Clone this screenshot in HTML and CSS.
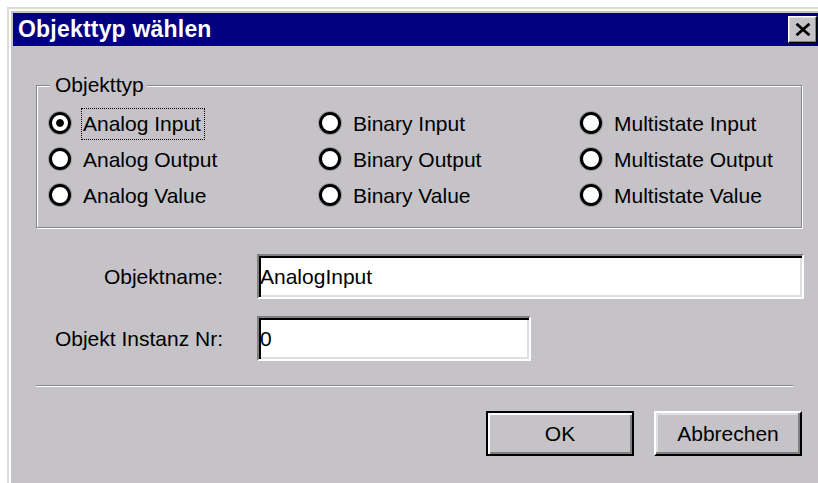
FILE: index.html
```html
<!DOCTYPE html>
<html lang="de">
<head>
<meta charset="utf-8">
<title>Objekttyp wählen</title>
<link rel="stylesheet" href="styles.css">
</head>
<body>
<div class="window">
  <div class="titlebar">
    <span class="title">Objekttyp wählen</span>
    <button class="close" type="button" aria-label="Schließen">
      <svg viewBox="0 0 16 13" width="16" height="13"><path d="M1.5 0.8 L14.5 12.2 M14.5 0.8 L1.5 12.2" stroke="#000" stroke-width="2.8" fill="none"/></svg>
    </button>
  </div>
  <div class="content">
    <div class="group" role="radiogroup" aria-label="Objekttyp">
      <span class="group-title">Objekttyp</span>
      <div class="options">
        <label class="option"><input type="radio" name="typ" checked><span class="caption focus">Analog Input</span></label>
        <label class="option"><input type="radio" name="typ"><span class="caption">Binary Input</span></label>
        <label class="option"><input type="radio" name="typ"><span class="caption">Multistate Input</span></label>
        <label class="option"><input type="radio" name="typ"><span class="caption">Analog Output</span></label>
        <label class="option"><input type="radio" name="typ"><span class="caption">Binary Output</span></label>
        <label class="option"><input type="radio" name="typ"><span class="caption">Multistate Output</span></label>
        <label class="option"><input type="radio" name="typ"><span class="caption">Analog Value</span></label>
        <label class="option"><input type="radio" name="typ"><span class="caption">Binary Value</span></label>
        <label class="option"><input type="radio" name="typ"><span class="caption">Multistate Value</span></label>
      </div>
    </div>
    <div class="fields">
      <label class="field-label" for="objname">Objektname:</label>
      <input class="text wide" id="objname" type="text" value="AnalogInput">
      <label class="field-label" for="objnr">Objekt Instanz Nr:</label>
      <input class="text short" id="objnr" type="text" value="0">
    </div>
    <hr class="separator">
    <div class="buttons">
      <button class="btn default" type="button">OK</button>
      <button class="btn" type="button">Abbrechen</button>
    </div>
  </div>
</div>
</body>
</html>
```

FILE: styles.css
```css
* { box-sizing: border-box; }

html, body { margin: 0; height: 100%; }

body {
  background: #fff;
  overflow: hidden;
  font-family: "Liberation Sans", Arial, sans-serif;
  font-size: 21px;
  color: #000;
}

/* dialog frame: light outer line, white inner line, grey gap */
.window {
  margin: 7px 0 0 7px;
  width: 819px;
  height: 500px;
  background: #c5c3c7;
  border: 2px solid #dcdbde;
  border-right-color: #000;
  border-bottom-color: #000;
  box-shadow: inset 2px 2px 0 #fff;
  padding: 4px;
  display: flex;
  flex-direction: column;
}

.titlebar {
  height: 33px;
  flex: none;
  background: #000080;
  display: flex;
  align-items: center;
  justify-content: space-between;
  padding: 0 3px 0 5px;
}

.title {
  color: #fff;
  font-weight: bold;
  font-size: 23px;
  line-height: 1;
  letter-spacing: 0.2px;
}

.close {
  width: 29px;
  height: 27px;
  padding: 0;
  margin: 0;
  background: #c5c3c7;
  border: 1px solid;
  border-color: #fff #000 #000 #fff;
  box-shadow: inset -1px -1px 0 #808080, inset 1px 1px 0 #dfdfdf;
  display: flex;
  align-items: center;
  justify-content: center;
}

.content {
  padding: 39px 0 0 23px;
  display: flex;
  flex-direction: column;
  align-items: flex-start;
}

/* etched group box */
.group {
  width: 766px;
  border: 1px solid #868589;
  box-shadow: inset 1px 1px 0 #fff, 1px 1px 0 #fff;
  display: flex;
  flex-direction: column;
}

.group-title {
  align-self: flex-start;
  margin: -12px 0 0 13px;
  padding: 0 3px 0 5px;
  line-height: 22px;
  background: #c5c3c7;
}

.options {
  margin-top: 10px;
  padding: 0 0 13px 12px;
  display: grid;
  grid-template-columns: 270px 261px 1fr;
  grid-auto-rows: 36px;
}

.option {
  display: flex;
  align-items: center;
}

/* round option marker: heavy black ring on white */
.option input {
  appearance: none;
  -webkit-appearance: none;
  width: 22px;
  height: 22px;
  margin: 0 0 3px 0;
  border-radius: 50%;
  border: 3.5px solid #000;
  background: #fff;
  box-shadow: 0 0 0 1px rgba(60, 60, 60, 0.3);
  flex: none;
}

.option input:checked {
  background: radial-gradient(circle, #000 0 3.4px, #fff 4.4px);
}

.caption {
  margin-left: 10px;
  padding: 4px 3px 4px 1px;
  line-height: 22px;
  border: 1px dotted transparent;
  white-space: nowrap;
}

.caption.focus { border-color: #000; }

.fields {
  margin-top: 26px;
  display: grid;
  grid-template-columns: 187px 547px;
  column-gap: 34px;
  row-gap: 17px;
  align-items: center;
}

.field-label {
  text-align: right;
  white-space: nowrap;
}

/* sunken edit field */
.text {
  height: 45px;
  margin: 0;
  padding: 0 0 0 1px;
  font: inherit;
  color: #000;
  background: #fff;
  border: 2px solid;
  border-color: #808080 #fff #fff #808080;
  box-shadow: inset 2px 2px 0 #000, inset -2px -2px 0 #dfdfdf;
  outline: none;
}

.text.wide { width: 547px; }
.text.short { width: 274px; }

.separator {
  margin: 24px 0 0 0;
  width: 757px;
  height: 0;
  border: 0;
  border-top: 1px solid #868589;
  border-bottom: 1px solid #fff;
}

.buttons {
  margin-top: 24px;
  width: 766px;
  display: flex;
  justify-content: flex-end;
  gap: 20px;
}

.btn {
  width: 148px;
  height: 45px;
  margin: 0;
  padding: 0;
  font: inherit;
  color: #000;
  background: #c5c3c7;
  border: 2px solid;
  border-color: #fff #000 #000 #fff;
  box-shadow: inset -2px -2px 0 #808080, inset 2px 2px 0 #dfdfdf;
}

.btn.default {
  border: 2px solid #000;
  box-shadow: inset 2px 2px 0 #fff, inset -2px -2px 0 #808080;
}
```
